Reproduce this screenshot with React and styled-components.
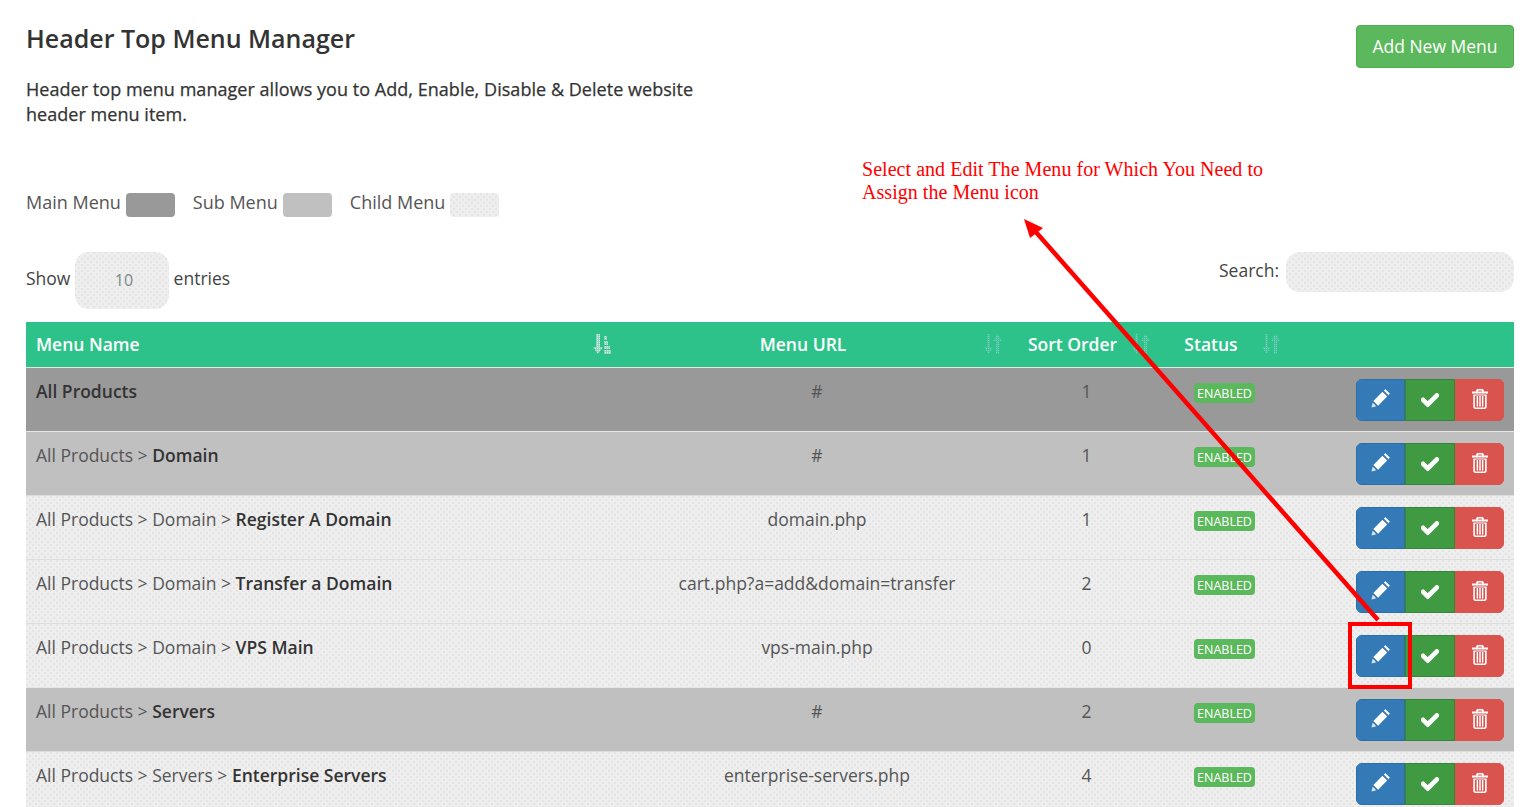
import React from 'react'
import styled, { createGlobalStyle } from 'styled-components'
import { FaCheck } from 'react-icons/fa'

const rows = [
  { level: 'main', path: [], name: 'All Products', url: '#', sort: 1 },
  { level: 'sub', path: ['All Products'], name: 'Domain', url: '#', sort: 1 },
  { level: 'child', path: ['All Products', 'Domain'], name: 'Register A Domain', url: 'domain.php', sort: 1 },
  { level: 'child', path: ['All Products', 'Domain'], name: 'Transfer a Domain', url: 'cart.php?a=add&domain=transfer', sort: 2 },
  { level: 'child', path: ['All Products', 'Domain'], name: 'VPS Main', url: 'vps-main.php', sort: 0 },
  { level: 'sub', path: ['All Products'], name: 'Servers', url: '#', sort: 2 },
  { level: 'child', path: ['All Products', 'Servers'], name: 'Enterprise Servers', url: 'enterprise-servers.php', sort: 4 },
]

// the reference is a dithered gif, so the light grey carries a faint dot grid
const dots = `
  background-image:
    radial-gradient(circle at 1px 1px, #e3e3e3 0.7px, transparent 0.8px),
    radial-gradient(circle at 4px 4px, #e3e3e3 0.7px, transparent 0.8px);
  background-size: 6px 6px;
`

const levelBg = { main: '#999999', sub: '#c0c0c0', child: '#eeeeee' }

const App = () => (
  <Page>
    <GlobalStyle />
    <TopBar>
      <div>
        <Title>Header Top Menu Manager</Title>
        <Intro>
          Header top menu manager allows you to Add, Enable, Disable &amp; Delete website header menu item.
        </Intro>
      </div>
      <AddButton>Add New Menu</AddButton>
    </TopBar>

    <Legend>
      <LegendItem>Main Menu <Swatch $level="main" /></LegendItem>
      <LegendItem>Sub Menu <Swatch $level="sub" /></LegendItem>
      <LegendItem>Child Menu <Swatch $level="child" /></LegendItem>
    </Legend>

    <Controls>
      <ShowEntries>
        Show <LengthSelect>10</LengthSelect> entries
      </ShowEntries>
      <SearchBox>
        Search: <SearchInput />
      </SearchBox>
    </Controls>

    <Table>
      <HeadRow>
        <HeadCell $align="left">
          Menu Name
          <SortIcon right={8} active />
        </HeadCell>
        <HeadCell>
          Menu URL
          <SortIcon right={13} />
        </HeadCell>
        <HeadCell>
          Sort Order
          <SortIcon right={8} />
        </HeadCell>
        <HeadCell>
          Status
          <SortIcon right={12} />
        </HeadCell>
        <HeadCell />
      </HeadRow>
      {rows.map((row) => (
        <Row key={row.name} $level={row.level}>
          <NameCell>
            {row.path.map((part) => (
              <span key={part}>{part} &gt; </span>
            ))}
            <strong>{row.name}</strong>
          </NameCell>
          <Cell>{row.url}</Cell>
          <Cell>{row.sort}</Cell>
          <BadgeCell>
            <Badge>ENABLED</Badge>
          </BadgeCell>
          <ActionCell>
            <ActionGroup>
              <ActionButton $width={49} $bg="#337ab7" $border="#2e6da4"><PencilIcon /></ActionButton>
              <ActionButton $width={50} $bg="#3f9a42" $border="#398439"><CheckIcon /></ActionButton>
              <ActionButton $width={49} $bg="#d9534f" $border="#d9534f"><TrashIcon /></ActionButton>
            </ActionGroup>
          </ActionCell>
        </Row>
      ))}
    </Table>

    <Note>
      Select and Edit The Menu for Which You Need to
      <br />
      Assign the Menu icon
    </Note>
    <Callout />
    <Arrow viewBox="0 0 1527 807" width="1527" height="807">
      <line x1="1378" y1="620" x2="1035" y2="231" stroke="#ff0000" strokeWidth="4.5" />
      <polygon points="1024,219 1043,228 1030,238" fill="#ff0000" />
    </Arrow>
  </Page>
)

export default App

const SortIcon = ({ right, active }) => (
  <SortGlyph $right={right} viewBox="0 0 18 20" width="18" height="20">
    <defs>
      <pattern id={active ? 'ditherOn' : 'ditherOff'} width="2" height="2" patternUnits="userSpaceOnUse">
        <rect width="2" height="2" fill={active ? '#8fd6c0' : '#45c49c'} />
        <rect width="1" height="1" fill={active ? '#e2efe6' : '#7fcfc0'} />
      </pattern>
    </defs>
    {active ? (
      <g fill="url(#ditherOn)">
        <path d="M3 0h4v13h3l-5 7-5-7h3z" />
        <rect x="11" y="2" width="3" height="4" />
        <rect x="11" y="7" width="4" height="4" />
        <rect x="11" y="12" width="6" height="3" />
        <rect x="11" y="16" width="7" height="4" />
      </g>
    ) : (
      <g fill="url(#ditherOff)">
        <path d="M3 0h3v13h3l-4.5 7L0 13h3z" />
        <path d="M15 20h-3V7H9l4.5-7L18 7h-3z" />
      </g>
    )}
  </SortGlyph>
)

const PencilIcon = () => (
  <ButtonGlyph viewBox="0 0 20 20" width="19" height="19" fill="#fff">
    <polygon points="0.5,19.5 1.8,14.4 5.6,18.2" fill="#dfe8f1" />
    <polygon points="2.5,12.5 12,3 17,8 7.5,17.5" />
    <polygon points="13.5,1.5 15.2,0.2 19.8,4.8 18.5,6.5" />
  </ButtonGlyph>
)

const TrashIcon = () => (
  <ButtonGlyph viewBox="0 0 16 20" width="16" height="20" fill="#fff">
    <path d="M5 0h6l1.2 2.6H16v1.8H0V2.6h3.8zM5.6 2.6h4.8l-.5-1.1H6.1z" />
    <path d="M1.3 5.4h13.4v12.4c0 1.2-.9 2.2-2 2.2H3.3c-1.1 0-2-1-2-2.2zm1.6 1v11.2c0 .5.3 1 .8 1h8.6c.5 0 .8-.5.8-1V6.4z" />
    <rect x="4.6" y="7" width="1.5" height="10.6" />
    <rect x="7.25" y="7" width="1.5" height="10.6" />
    <rect x="9.9" y="7" width="1.5" height="10.6" />
  </ButtonGlyph>
)

const GlobalStyle = createGlobalStyle`
  html, body {
    margin: 0;
    background: #fff;
  }
  body {
    font-family: "Open Sans", "Liberation Sans", sans-serif;
    font-size: 17.5px;
    color: #555;
  }
`

const Page = styled.div`
  position: relative;
  height: 807px;
  padding: 0 13px 0 26px;
  box-sizing: border-box;
  overflow: hidden;
`

const TopBar = styled.header`
  display: flex;
  justify-content: space-between;
  align-items: flex-start;
  height: 193px;
`

const Title = styled.h1`
  margin: 21px 0 0;
  font-size: 25px;
  line-height: 34px;
  font-weight: 600;
  color: #333;
`

const Intro = styled.p`
  margin: 22px 0 0;
  width: 680px;
  font-size: 18px;
  line-height: 25px;
  letter-spacing: 0.04px;
  -webkit-text-stroke: 0.25px #333;
  color: #333;
`

const AddButton = styled.button`
  margin-top: 25px;
  width: 158px;
  height: 43px;
  padding: 0 0 2px;
  border: 1px solid #4cae4c;
  border-radius: 4px;
  background: #5cb85c;
  color: #fff;
  font: inherit;
`

const Legend = styled.div`
  display: flex;
  gap: 18px;
  height: 59px;
  font-size: 18px;
`

const LegendItem = styled.div`
  display: flex;
  gap: 5px;
  align-items: flex-start;
  line-height: 19px;
`

const Swatch = styled.span`
  width: 49px;
  height: 24px;
  border-radius: 4px;
  background-color: ${({ $level }) => levelBg[$level]};
  ${({ $level }) => ($level === 'child' ? dots : '')}
`

const Controls = styled.div`
  display: flex;
  justify-content: space-between;
  align-items: flex-start;
  height: 70px;
  color: #444;
`

const ShowEntries = styled.div`
  display: flex;
  align-items: flex-start;
  gap: 4.6px;
  line-height: 53px;
`

const LengthSelect = styled.div`
  width: 94px;
  height: 57px;
  display: flex;
  align-items: center;
  justify-content: center;
  padding: 0 0 1px 4px;
  box-sizing: border-box;
  border-radius: 14px;
  background-color: #eee;
  ${dots}
  color: #7b8a8b;
  font-size: 16px;
`

const SearchBox = styled.label`
  display: flex;
  align-items: flex-start;
  gap: 7px;
  line-height: 36px;
`

const SearchInput = styled.div`
  width: 228px;
  height: 40px;
  border-radius: 14px;
  background-color: #eee;
  ${dots}
`

const Table = styled.div`
  display: grid;
  grid-template-columns: 593px 396px 143px 134px 222px;
`

const HeadRow = styled.div`
  display: grid;
  grid-column: 1 / -1;
  grid-template-columns: subgrid;
  height: 45px;
  background: #2dc289;
`

const HeadCell = styled.div`
  position: relative;
  display: flex;
  align-items: center;
  justify-content: ${({ $align }) => ($align === 'left' ? 'flex-start' : 'center')};
  padding: ${({ $align }) => ($align === 'left' ? '0 0 2px 10px' : '0 28px 2px 0')};
  color: #fff;
  font-weight: 600;
`

const SortGlyph = styled.svg`
  position: absolute;
  top: 12px;
  right: ${({ $right }) => $right}px;
`

const Row = styled.div`
  display: grid;
  grid-column: 1 / -1;
  grid-template-columns: subgrid;
  height: 63px;
  border-top: 1px solid ${({ $level }) => ($level === 'child' ? '#dddddd' : '#e6e6e6')};
  background-color: ${({ $level }) => levelBg[$level]};
  ${({ $level }) => ($level === 'child' ? dots : '')}
`

const Cell = styled.div`
  padding-top: 11px;
  line-height: 25px;
  text-align: center;
`

const NameCell = styled(Cell)`
  padding-left: 10px;
  text-align: left;

  strong {
    font-weight: 600;
    color: #333;
  }
`

const BadgeCell = styled.div`
  display: flex;
  justify-content: center;
  align-items: flex-start;
  padding: 15px 1px 0 0;
`

const Badge = styled.span`
  width: 61px;
  height: 20px;
  line-height: 22px;
  text-align: center;
  border-radius: 4px;
  background: #5cb85c;
  color: #fff;
  font-size: 12.5px;
`

const ActionCell = styled.div`
  display: flex;
  justify-content: flex-end;
  padding: 11px 10px 0 0;
`

const ActionGroup = styled.div`
  display: flex;
  height: 42px;
  border-radius: 6px;
  overflow: hidden;
`

const ActionButton = styled.button`
  display: flex;
  align-items: center;
  justify-content: center;
  width: ${({ $width }) => $width}px;
  padding: 0;
  border: 1px solid ${({ $border }) => $border};
  background: ${({ $bg }) => $bg};
  color: #fff;
  font-size: 18px;
`

const ButtonGlyph = styled.svg`
  margin-bottom: 3px;
`

const CheckIcon = styled(FaCheck)`
  margin-bottom: 1px;
  stroke: currentColor;
  stroke-width: 30px;
`

const Note = styled.div`
  position: absolute;
  left: 862px;
  top: 158px;
  font-family: "Liberation Serif", serif;
  font-size: 20px;
  letter-spacing: 0.04px;
  line-height: 23px;
  color: #ff0000;
`

const Callout = styled.div`
  position: absolute;
  left: 1348px;
  top: 622px;
  width: 56px;
  height: 59px;
  border: 4px solid #ff0000;
`

const Arrow = styled.svg`
  position: absolute;
  left: 0;
  top: 0;
  pointer-events: none;
`
